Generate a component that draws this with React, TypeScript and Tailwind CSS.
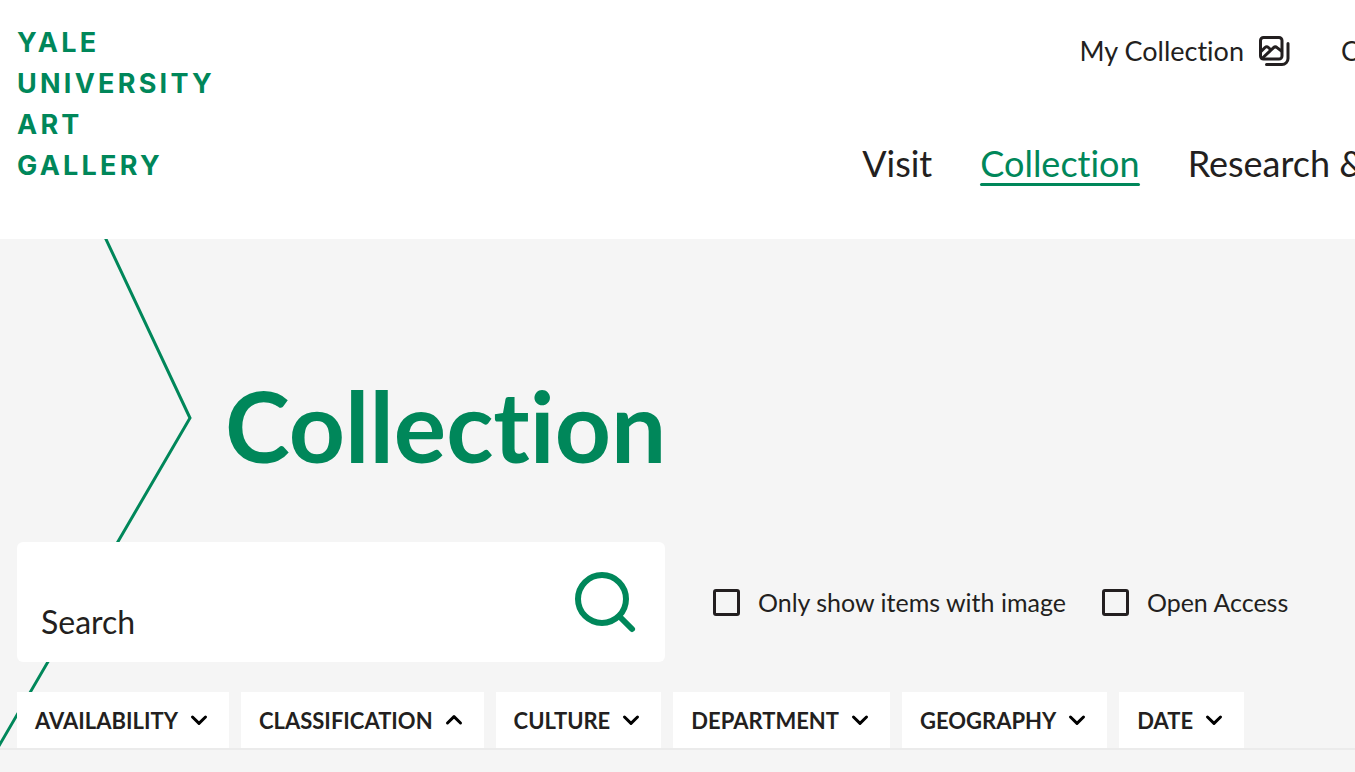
import { useState } from 'react';

const filters = [
  'AVAILABILITY',
  'CLASSIFICATION',
  'CULTURE',
  'DEPARTMENT',
  'GEOGRAPHY',
  'DATE',
];

function CollectionIcon() {
  return (
    <svg
      width="32"
      height="32"
      viewBox="0 0 32 32"
      fill="none"
      stroke="currentColor"
      strokeWidth="3"
      strokeLinecap="round"
      strokeLinejoin="round"
      aria-hidden="true"
    >
      <rect x="2.5" y="2.5" width="21.5" height="21.5" rx="3" />
      <path d="M3 16.5L7 12.5Q8.7 11 10.4 12.5L12.5 14.5" />
      <path d="M4 23.5L15.6 12.6Q17.3 11 19 12.6L23.5 16" />
      <path d="M30 8.5v15a6 6 0 0 1-6 6H8.5" />
    </svg>
  );
}

function Chevron({ up }: { up: boolean }) {
  return (
    <svg
      width="18"
      height="12"
      viewBox="0 0 18 12"
      fill="none"
      stroke="black"
      strokeWidth="3"
      strokeLinecap="round"
      strokeLinejoin="round"
      aria-hidden="true"
    >
      <path d={up ? 'M2.5 9L9 2.7L15.5 9' : 'M2.5 3L9 9.3L15.5 3'} />
    </svg>
  );
}

function Header() {
  return (
    <header className="flex justify-between bg-white pl-[17px] pt-[22px] pb-[53px]">
      <a
        href="#"
        className="flex flex-col font-['Inter'] text-[27px] leading-[41px] font-bold tracking-[0.12em] text-[#00875a]"
      >
        <span>YALE</span>
        <span>UNIVERSITY</span>
        <span>ART</span>
        <span>GALLERY</span>
      </a>

      <div className="flex flex-col items-end whitespace-nowrap">
        <div className="-mr-1 flex items-center gap-[51px] pt-[11px] text-[27px] leading-9">
          <a href="#" className="flex items-center gap-3.5">
            My Collection
            <CollectionIcon />
          </a>
          <a href="#">C</a>
        </div>
        <nav className="-mr-2.5 mt-[71px] flex items-start gap-12 text-[36px] leading-[46px]">
          <a href="#">Visit</a>
          <a
            href="#"
            className="relative text-[#00875a] after:absolute after:inset-x-0 after:bottom-0 after:h-[3px] after:rounded-full after:bg-[#00875a]"
          >
            Collection
          </a>
          <a href="#">Research &amp;</a>
        </nav>
      </div>
    </header>
  );
}

function Option({ label }: { label: string }) {
  return (
    <label className="flex items-center gap-[18px] text-[25px] leading-8">
      <input
        type="checkbox"
        className="size-[27px] appearance-none rounded-[3px] border-3 border-[#231f20] checked:bg-[#231f20]"
      />
      {label}
    </label>
  );
}

export function App() {
  const [open, setOpen] = useState('CLASSIFICATION');
  const [search, setSearch] = useState('');

  return (
    <div className="min-h-screen overflow-hidden bg-[#f5f5f5] font-['Lato',sans-serif] text-[#231f20] [font-variant-ligatures:none]">
      <Header />

      <main className="relative">
        <svg
          className="absolute left-0 top-0"
          width="200"
          height="509"
          viewBox="0 0 200 509"
          fill="none"
          stroke="#00875a"
          strokeWidth="3"
          aria-hidden="true"
        >
          <path d="M104 -4L190 179L-4 512" />
        </svg>

        <div className="relative">
          <h1 className="pt-[126px] pl-[225px] text-[98px] leading-[120px] font-bold text-[#00875a]">
            Collection
          </h1>

          <form
            className="mt-[57px] flex items-center gap-12 pl-[17px]"
            onSubmit={(e) => e.preventDefault()}
          >
            <div className="flex h-[120px] w-[648px] items-center rounded-md bg-white pr-7 pl-6">
              <input
                type="text"
                aria-label="Search"
                placeholder="Search"
                value={search}
                onChange={(e) => setSearch(e.target.value)}
                className="mt-10 min-w-0 flex-1 text-[32px] leading-10 outline-none placeholder:text-[#231f20]"
              />
              <button type="submit" aria-label="Submit search">
                <svg
                  width="64"
                  height="64"
                  viewBox="0 0 64 64"
                  fill="none"
                  stroke="#00875a"
                  strokeWidth="6"
                  strokeLinecap="round"
                  aria-hidden="true"
                >
                  <circle cx="29" cy="29" r="24" />
                  <path d="M46.5 46.5L59 59" />
                </svg>
              </button>
            </div>
            <div className="flex gap-9 whitespace-nowrap">
              <Option label="Only show items with image" />
              <Option label="Open Access" />
            </div>
          </form>

          <div className="mt-[30px] flex gap-3 border-b-2 border-[#ebebeb] pl-[17px]">
            {filters.map((name) => (
              <button
                key={name}
                type="button"
                aria-expanded={open === name}
                onClick={() => setOpen(open === name ? '' : name)}
                className="flex h-14 items-center gap-3 bg-white pr-[21px] pl-[18px] text-[22px] font-bold"
              >
                {name}
                <Chevron up={open === name} />
              </button>
            ))}
          </div>
        </div>
      </main>
    </div>
  );
}

export default App
